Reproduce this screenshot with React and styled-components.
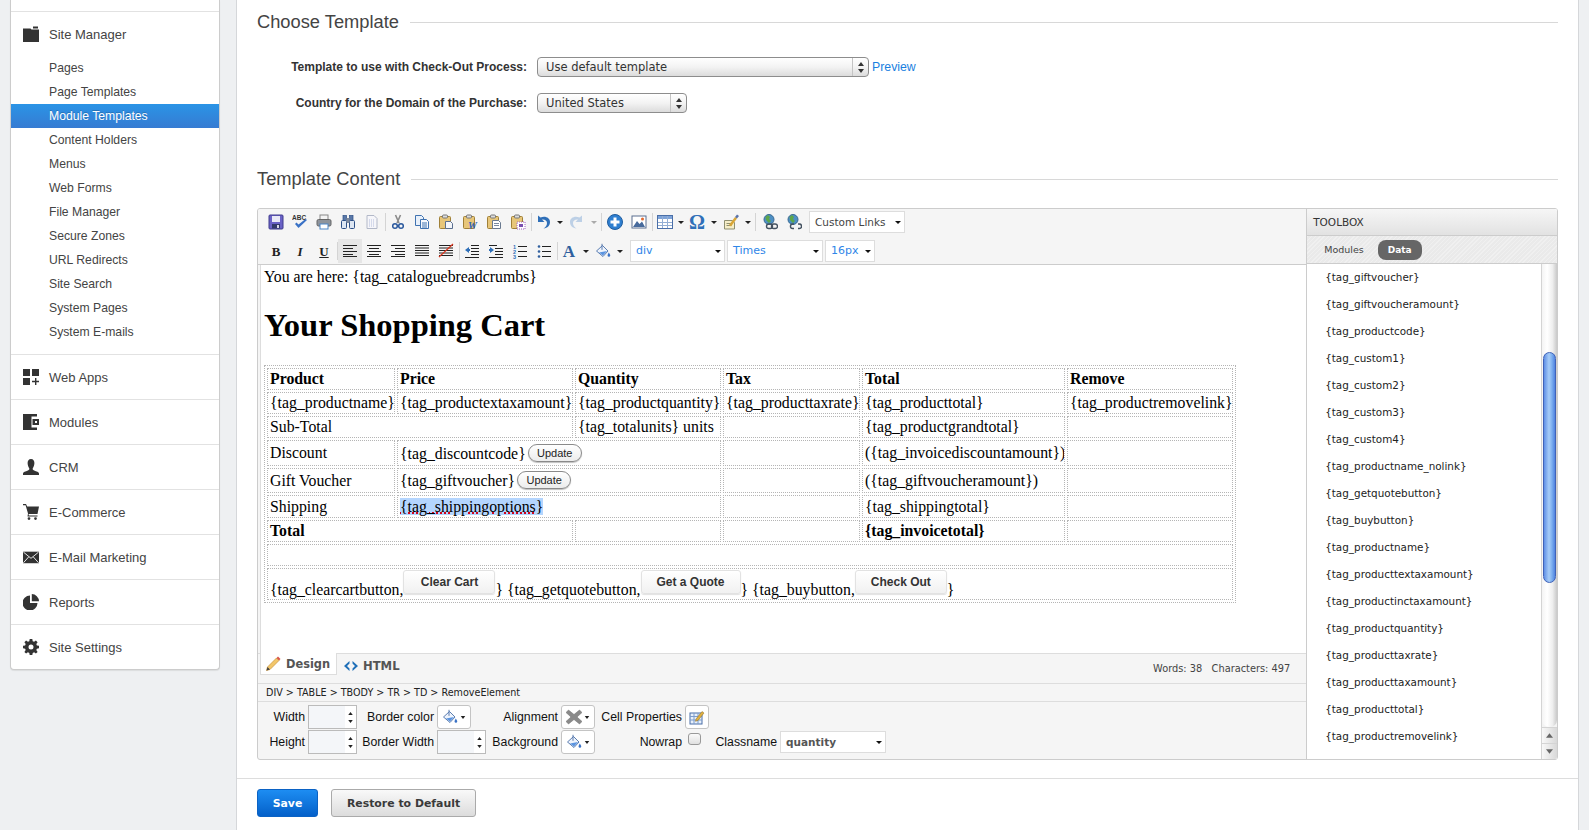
import React from "react";
import styled, { createGlobalStyle } from "styled-components";

const Global = createGlobalStyle`
  html, body { margin: 0; padding: 0; height: 100%; overflow: hidden; background: #eef0f2; }
  body { font-family: "Liberation Sans", Arial, sans-serif; }
  * { box-sizing: border-box; }
`;

const LUCIDA = `"DejaVu Sans", Verdana, sans-serif`;

/* ---------- page ---------- */
const Page = styled.div`
  display: flex;
  align-items: flex-start;
  width: 1589px;
  height: 830px;
  overflow: hidden;
`;

/* ---------- sidebar ---------- */
const Sidebar = styled.nav`
  width: 210px;
  margin-left: 10px;
  background: #fff;
  border: 1px solid #ccc;
  border-top: 0;
  border-radius: 0 0 4px 4px;
  box-shadow: 0 1px 1px rgba(0, 0, 0, 0.08);
`;
const SidebarStub = styled.div`
  height: 12px;
  border-bottom: 1px solid #e2e2e2;
`;
const SiteBlock = styled.div`
  height: 343px;
  border-bottom: 1px solid #e2e2e2;
`;
const NavHead = styled.div`
  display: flex;
  align-items: center;
  height: 44px;
  padding-left: 12px;
  font-size: 13px;
  color: #444;
  gap: 10px;
  & > svg { flex: none; }
`;
const NavRow = styled(NavHead)`
  height: ${(p) => (p.$last ? 44 : 45)}px;
  border-bottom: ${(p) => (p.$last ? "0" : "1px solid #e2e2e2")};
`;
const SubItem = styled.div`
  height: 24px;
  line-height: 24px;
  padding-left: 38px;
  font-size: 12.2px;
  color: ${(p) => (p.$active ? "#fff" : "#444")};
  background: ${(p) => (p.$active ? "linear-gradient(#2a94e6,#367bd2)" : "transparent")};
  text-shadow: ${(p) => (p.$active ? "0 -1px 0 rgba(0,0,0,.2)" : "none")};
`;

/* ---------- main ---------- */
const Main = styled.main`
  width: 1343px;
  margin-left: 16px;
  height: 830px;
  background: #fff;
  border-left: 1px solid #d5d7da;
  border-right: 1px solid #d5d7da;
`;
const Inner = styled.div`
  padding: 0 20px 0 20px;
`;
const SectionHead = styled.div`
  display: flex;
  align-items: center;
  height: 44px;
  margin-top: ${(p) => p.$mt || 0}px;
  gap: 11px;
  font-size: 18.3px;
  color: #444;
  &::after { content: ""; flex: 1; height: 1px; background: #d8d8d8; }
`;
const FormRow = styled.div`
  display: flex;
  align-items: center;
  height: 20px;
  margin-top: ${(p) => p.$mt}px;
`;
const FormLabel = styled.label`
  width: 270px;
  text-align: right;
  font-size: 12px;
  font-weight: bold;
  color: #333;
  margin-right: 10px;
`;
const AquaSelect = styled.div`
  position: relative;
  width: ${(p) => p.$w}px;
  height: 20px;
  line-height: 18px;
  padding-left: 8px;
  border: 1px solid #8d8d8d;
  border-radius: 4px;
  background: linear-gradient(#fff, #f3f3f3 50%, #dcdcdc);
  font-family: ${LUCIDA};
  font-size: 11.5px;
  color: #333;
`;
const AquaArrows = styled.span`
  position: absolute;
  right: 0;
  top: 0;
  bottom: 0;
  width: 16px;
  border-left: 1px solid #c4c4c4;
  display: flex;
  align-items: center;
  justify-content: center;
`;
const LinkText = styled.a`
  margin-left: 3px;
  font-size: 12.3px;
  color: #1b7fe0;
`;

/* ---------- editor ---------- */
const Editor = styled.section`
  display: flex;
  height: 552px;
  margin-top: 7px;
  border: 1px solid #ccc;
  border-radius: 3px;
  overflow: hidden;
  background: #f5f5f5;
`;
const EditorCol = styled.div`
  width: 1049px;
  display: flex;
  flex-direction: column;
`;
const Toolbar = styled.div`
  height: 56px;
  border-bottom: 1px solid #ccc;
  background: #f5f5f5;
`;
const ToolRow = styled.div`
  display: flex;
  align-items: center;
  height: 26px;
  margin-top: ${(p) => p.$mt || 0}px;
  padding-left: 6px;
`;
const Slot = styled.span`
  flex: none;
  width: ${(p) => p.$w || 24}px;
  height: 24px;
  display: flex;
  align-items: center;
  justify-content: center;
  background: ${(p) => (p.$active ? "#e6e6e6" : "transparent")};
`;
const Glyph = styled.span`
  font-family: "Liberation Serif", serif;
  font-weight: bold;
  font-style: ${(p) => (p.$i ? "italic" : "normal")};
  text-decoration: ${(p) => (p.$u ? "underline" : "none")};
  font-size: ${(p) => p.$s || 13}px;
  color: ${(p) => p.$c || "#222"};
  line-height: 1;
`;
const Caret = styled.span`
  flex: none;
  width: ${(p) => p.$w || 11}px;
  display: flex;
  justify-content: center;
  &::after {
    content: "";
    border-left: 3px solid transparent;
    border-right: 3px solid transparent;
    border-top: 3px solid ${(p) => (p.$faded ? "#aaa" : "#222")};
  }
`;
const Sep = styled.span`
  flex: none;
  width: ${(p) => p.$w || 2}px;
  height: 18px;
  display: flex;
  justify-content: center;
  &::after { content: ""; width: 1px; background: #d4d4d4; }
`;
const Gap = styled.span`
  flex: none;
  width: ${(p) => p.$w}px;
`;
const ToolSelect = styled.div`
  flex: none;
  position: relative;
  width: ${(p) => p.$w}px;
  height: 22px;
  line-height: 20px;
  padding-left: ${(p) => p.$pl || 5}px;
  background: #fff;
  border: 1px solid #ddd;
  font-family: ${LUCIDA};
  font-size: ${(p) => p.$fs || 11}px;
  color: ${(p) => p.$c || "#2f86e8"};
  &::after {
    content: "";
    position: absolute;
    right: 3px;
    top: 9px;
    border-left: 3px solid transparent;
    border-right: 3px solid transparent;
    border-top: 3px solid #111;
  }
`;
const EditArea = styled.div`
  height: 388px;
  background: #fff;
  margin-left: 2px;
  border-left: 1px solid #ddd;
  padding: 3px 0 0 3px;
  font-family: "Liberation Serif", "Times New Roman", serif;
  font-size: 15.8px;
  line-height: 18px;
  color: #000;
  overflow: hidden;
`;
const Title = styled.h1`
  margin: 21px 0 21px;
  font-size: 32.5px;
  line-height: 37px;
  font-weight: bold;
`;
const Table = styled.table`
  table-layout: fixed;
  width: 972px;
  border-collapse: separate;
  border-spacing: 2px;
  border: 1px dotted #b5b5b5;
`;
const Tr = styled.tr`
  height: ${(p) => p.$h}px;
`;
const Td = styled.td`
  border: 1px dotted #b5b5b5;
  padding: 0 0 0 2px;
  white-space: nowrap;
  overflow: hidden;
  vertical-align: ${(p) => p.$va || "middle"};
  font-weight: ${(p) => (p.$b ? "bold" : "normal")};
`;
const PillButton = styled.button`
  height: 18px;
  width: ${(p) => p.$w || 54}px;
  padding: 0;
  margin-left: 2px;
  border: 1px solid #8a8a8a;
  border-radius: 9px;
  background: linear-gradient(#fff, #ececec);
  box-shadow: 0 1px 1px rgba(0, 0, 0, 0.25);
  font-family: "Liberation Sans", sans-serif;
  font-size: 11px;
  color: #222;
  vertical-align: 2px;
`;
const CartButton = styled.button`
  height: 24px;
  width: ${(p) => p.$w}px;
  padding: 0;
  border: 1px solid #e2e2e2;
  border-radius: 3px;
  background: linear-gradient(#fff, #f1f1f1);
  box-shadow: 0 1px 1px rgba(0, 0, 0, 0.12);
  font-family: "Liberation Sans", sans-serif;
  font-size: 12px;
  font-weight: bold;
  color: #333;
  vertical-align: 9px;
`;
const Selected = styled.span`
  background: #b4d5fe;
  text-decoration: underline dotted #d0021b 2px;
  text-underline-offset: 1px;
`;
const TabBar = styled.div`
  position: relative;
  height: 30px;
  display: flex;
  align-items: flex-start;
  padding-left: 2px;
  border-top: 1px solid #ddd;
  background: #f5f5f5;
`;
const DesignTab = styled.div`
  display: flex;
  align-items: center;
  gap: 5px;
  height: 22px;
  width: 77px;
  padding-left: 4px;
  background: #fff;
  border-left: 1px solid #ddd;
  border-right: 1px solid #ddd;
  border-bottom: 1px solid #ddd;
  margin-top: -1px;
  font-family: ${LUCIDA};
  font-size: 11.4px;
  font-weight: bold;
  color: #555;
`;
const HtmlTab = styled(DesignTab)`
  background: transparent;
  border: 0;
  margin-top: 1px;
  padding-left: 6px;
  gap: 4px;
  font-size: 11.6px;
  width: auto;
`;
const Counts = styled.div`
  margin-left: auto;
  margin-right: 16px;
  margin-top: 9px;
  font-family: ${LUCIDA};
  font-size: 9.8px;
  color: #444;
  white-space: pre;
`;
const Crumbs = styled.div`
  height: 19px;
  line-height: 18px;
  padding-left: 8px;
  border-top: 1px solid #ddd;
  border-bottom: 1px solid #ddd;
  font-family: ${LUCIDA};
  font-size: 9.6px;
  color: #222;
`;
const PropsGrid = styled.div`
  display: grid;
  grid-template-columns: 50px 49px 80px 49px 75px 34px 90px 24px 71px 106px;
  grid-template-rows: 24px 24px;
  row-gap: 1px;
  padding: 3px 0 0 0;
  font-size: 12.3px;
  color: #111;
`;
const PropLabel = styled.span`
  grid-column: ${(p) => p.$col};
  grid-row: ${(p) => p.$row};
  align-self: center;
  justify-self: end;
  padding-right: 3px;
  white-space: nowrap;
`;
const PropField = styled.div`
  grid-column: ${(p) => p.$col};
  grid-row: ${(p) => p.$row};
  display: flex;
  align-items: center;
`;
const NumberBox = styled.div`
  width: 49px;
  height: 24px;
  display: flex;
  border: 1px solid #bbb;
  background: #fff;
`;
const NumberFace = styled.span`
  flex: 1;
  background: #f4f6f9;
`;
const Spin = styled.span`
  width: 11px;
  display: flex;
  flex-direction: column;
  align-items: center;
  justify-content: space-around;
  padding: 3px 0;
`;
const SwatchButton = styled.div`
  width: 34px;
  height: 24px;
  display: flex;
  align-items: center;
  justify-content: flex-end;
  gap: 2px;
  padding-right: 4px;
  background: #fff;
  border: 1px solid #c4c4c4;
  border-radius: 3px;
`;
const IconButton = styled(SwatchButton)`
  width: 24px;
  padding: 0;
  justify-content: center;
`;
const CheckBox = styled.span`
  width: 13px;
  height: 12px;
  margin: -6px 0 0 3px;
  border: 1px solid #999;
  border-radius: 3px;
  background: linear-gradient(#fafafa, #e0e0e0);
`;
const ClassSelect = styled(ToolSelect)`
  font-size: 10.5px;
  color: #555;
  font-weight: bold;
  height: 22px;
`;

/* ---------- toolbox ---------- */
const Toolbox = styled.aside`
  width: 251px;
  display: flex;
  flex-direction: column;
  border-left: 1px solid #ccc;
  background: #fff;
`;
const ToolboxHead = styled.div`
  height: 27px;
  line-height: 26px;
  padding-left: 6px;
  background: linear-gradient(#f6f6f6, #e2e2e2);
  border-bottom: 1px solid #ccc;
  font-family: ${LUCIDA};
  font-size: 10.5px;
  color: #333;
`;
const ToolboxTabs = styled.div`
  height: 28px;
  display: flex;
  align-items: center;
  padding-left: 17px;
  border-bottom: 1px solid #ccc;
  background: repeating-linear-gradient(135deg, #f0f0f0 0 1px, #eaeaea 1px 3px);
  font-family: ${LUCIDA};
  font-size: 9.5px;
  color: #444;
`;
const DataPill = styled.span`
  width: 44px;
  height: 20px;
  line-height: 20px;
  margin-left: 14px;
  text-align: center;
  border-radius: 8px;
  background: #666;
  color: #fff;
  font-size: 9px;
  font-weight: bold;
`;
const ToolboxBody = styled.div`
  flex: 1;
  min-height: 0;
  display: flex;
`;
const TagList = styled.ul`
  flex: 1;
  margin: 0;
  padding: 0 0 0 18px;
  list-style: none;
  overflow: hidden;
  font-family: ${LUCIDA};
  font-size: 10.4px;
  color: #222;
`;
const TagItem = styled.li`
  height: 27px;
  line-height: 26px;
  white-space: nowrap;
`;
const ScrollBar = styled.div`
  width: 16px;
  display: flex;
  flex-direction: column;
  border-left: 1px solid #d4d4d4;
  background: #f3f3f3;
`;
const Track = styled.div`
  flex: 1;
  padding: 88px 1px 0;
  background: linear-gradient(90deg, #f4f4f4, #fff 35%, #eee 70%, #c9c9c9);
  border-radius: 0 0 7px 7px;
`;
const Thumb = styled.div`
  height: 231px;
  border-radius: 7px;
  border: 1px solid #3f62b8;
  background: linear-gradient(90deg, #5f8fe6, #a6ccf7 45%, #7fb1f0 70%, #4f83e0);
`;
const ScrollBtn = styled.div`
  height: 16px;
  display: flex;
  align-items: center;
  justify-content: center;
  border-top: 1px solid #d4d4d4;
  background: linear-gradient(90deg, #f8f8f8, #d8d8d8);
`;

/* ---------- footer ---------- */
const Footer = styled.footer`
  display: flex;
  gap: 13px;
  margin-top: 18px;
  padding: 10px 0 0 20px;
  border-top: 1px solid #ddd;
`;
const SaveButton = styled.button`
  width: 61px;
  height: 28px;
  border: 1px solid #0b62c4;
  border-radius: 3px;
  background: linear-gradient(#1d8df2, #0460c9);
  color: #fff;
  font-family: ${LUCIDA};
  font-size: 10.9px;
  font-weight: bold;
  padding: 0;
`;
const RestoreButton = styled(SaveButton)`
  width: 145px;
  border-color: #aaa;
  background: linear-gradient(#f9f9f9, #dcdcdc);
  color: #3a3a3a;
`;

/* ---------- drawings ---------- */
const Svg = ({ s = 16, v = "0 0 16 16", children }) => (
  <svg width={s} height={s} viewBox={v} aria-hidden="true">{children}</svg>
);

const nav = {
  folder: <path fill="#333" d="M0 2.5h7.5l1 1H16V16H0zM10 0.5h5v2h-5z" />,
  apps: <path fill="#333" d="M0 0h7v7H0zM9 0h7v7H9zM0 9h7v7H0zM12 9h1.4v2.8H16v1.4h-2.6V16H12v-2.8H9v-1.4h3z" />,
  modules: <path fill="#333" fillRule="evenodd" d="M0 0h14v2.5H8.5v11H14V16H0zM9.5 5H16v6H9.5zM12 7v2h2V7z" />,
  person: <path fill="#333" d="M8 0c2.3 0 3.4 1.7 3.4 4S10.5 8 9.8 9.2c-.4 1 0 1.8 1.3 2.3 2.4.9 4.9 1.5 4.9 3v1.5H0v-1.5c0-1.5 2.5-2.1 4.9-3 1.3-.5 1.7-1.3 1.3-2.3C5.5 8 4.6 6.3 4.6 4S5.7 0 8 0z" />,
  cart: <path fill="#333" d="M0 0h3l1.2 2.5H16l-1.5 7.5H5.500L5.900 11.500H14.500v1H4.500L5 9.500 2.600 1.200H0zM6 13.200a1.400 1.400 0 1 1 0 2.800 1.400 1.400 0 0 1 0-2.800zM12.500 13.200a1.400 1.400 0 1 1 0 2.800 1.400 1.400 0 0 1 0-2.800z" />,
  mail: <><rect x="0" y="2" width="18" height="13" fill="#333" /><path d="M0.500 2.500 9 9.500l8.500-7M0.500 14.500 6.500 7.800M17.500 14.500 11.500 7.800" fill="none" stroke="#fff" strokeWidth="1" /></>,
  pie: <path fill="#333" d="M7 1.500V9h7.500A7.500 7.500 0 1 1 7 1.500zM8.800 0A7.500 7.500 0 0 1 16 7.200H8.800z" />,
  gear: <path fill="#333" fillRule="evenodd" d="M6.700 0h2.600l.4 2.200 1.400.6L12.900 1.500l1.700 1.700-1.300 1.800.6 1.400 2.100.4v2.500l-2.100.4-.6 1.400 1.300 1.800-1.700 1.700-1.800-1.300-1.400.6-.4 2.100H6.700l-.4-2.100-1.400-.6-1.800 1.300-1.700-1.700 1.300-1.800-.6-1.400L0 9.300V6.800l2.100-.4.6-1.400-1.300-1.800 1.700-1.700 1.800 1.300 1.400-.6zM8 5.500a2.500 2.500 0 1 0 0 5 2.500 2.500 0 0 0 0-5z" />,
};

const Lines = ({ rows, c = "#222" }) => (
  <>{rows.map(([x, y, w], i) => <rect key={i} x={x} y={y} width={w} height="1" fill={c} />)}</>
);
const clip = (
  <>
    <rect x="1.500" y="2.500" width="11" height="12" rx="1" fill="#e7c67a" stroke="#a08038" />
    <rect x="4.500" y="1" width="5" height="3" rx="1" fill="#ddd" stroke="#777" />
  </>
);
const bucket = (
  <>
    <path d="M1.500 8 7.500 2.500 13 8l-5 5.500z" fill="#eef3fb" stroke="#4a6fa8" strokeWidth=".9" />
    <path d="M7 .8v6" stroke="#4a6fa8" strokeWidth=".9" />
    <path d="M4 9.500l8-1.500-4 4.500z" fill="#5a94e0" />
    <path d="M13.800 9.500c.9 1.400 1.400 2.200 1.400 2.900a1.300 1.300 0 0 1-2.600 0c0-.7.400-1.500 1.200-2.900z" fill="#3a72c6" />
  </>
);
const globe = (
  <>
    <circle cx="7" cy="5.500" r="5" fill="#4d8fc4" stroke="#3a6a92" />
    <path d="M3.500 3 6 1l2 2-1 2 2 2-2 2-3-3z" fill="#5ca64a" />
  </>
);

const tool = {
  save: <><rect x="1" y="1" width="14" height="14" rx="1" fill="#6a62c6" stroke="#3e3a8c" /><rect x="4" y="2" width="8" height="6" fill="#e9e9f6" /><rect x="4" y="10" width="8" height="4.500" fill="#333a6a" /><rect x="9" y="11" width="2" height="3" fill="#d8d8e8" /></>,
  spell: <><text x="0" y="6" fontFamily="Liberation Sans" fontWeight="bold" fontSize="6.500" fill="#333">ABC</text><path d="M3 10l3.500 4L15 6l-1.500-1L6.500 10.500 4.500 8.500z" fill="#3a72c6" /></>,
  print: <><rect x="4" y="1" width="8" height="5" fill="#f4f4f4" stroke="#888" /><rect x="1" y="5.500" width="14" height="6.500" rx="1.500" fill="#8e949c" stroke="#666" /><rect x="4" y="10" width="8" height="5" fill="#fff" stroke="#4a86c8" /></>,
  find: <><rect x="3" y="1.500" width="3.500" height="5" fill="#5a78a8" stroke="#2c4f86" strokeWidth=".7" /><rect x="9.500" y="1.500" width="3.500" height="5" fill="#5a78a8" stroke="#2c4f86" strokeWidth=".7" /><rect x="1.500" y="6.500" width="5" height="8" rx="1" fill="#dde6f2" stroke="#2c4f86" /><rect x="9.500" y="6.500" width="5" height="8" rx="1" fill="#dde6f2" stroke="#2c4f86" /><rect x="6.500" y="4" width="3" height="5" fill="#7e8a9c" /></>,
  doc: <><path d="M3 1.500h7l3 3v10H3z" fill="#f6f6fa" stroke="#b2b8c8" /><path d="M5 6h6M5 8h6M5 10h6M5 12h6" stroke="#b4bedc" strokeDasharray="1 1" /></>,
  cut: <><path d="M5.500 1 9 9M10.500 1 7 9" stroke="#8a8a8a" strokeWidth="1.600" /><circle cx="5" cy="12" r="2.300" fill="none" stroke="#2c5a9e" strokeWidth="1.500" /><circle cx="11" cy="12" r="2.300" fill="none" stroke="#2c5a9e" strokeWidth="1.500" /></>,
  copy: <><path d="M1.500 1.500h6l2 2v8h-8z" fill="#e8f0fa" stroke="#3f72b0" /><path d="M6.500 5.500h6l2 2v7h-8z" fill="#f6f9fd" stroke="#3f72b0" /><path d="M8 9h5M8 11h5M8 13h5" stroke="#3f72b0" /></>,
  paste: <>{clip}<path d="M7.500 7.500h5l2 2v5h-7z" fill="#f4f6fa" stroke="#5a6f90" /></>,
  pasteWord: <>{clip}<text x="6" y="15" fontFamily="Liberation Serif" fontStyle="italic" fontWeight="bold" fontSize="10" fill="#2f63b8">W</text></>,
  pasteText: <>{clip}<path d="M6.500 6.500h6l2 2v6h-8z" fill="#fff" stroke="#6a7a90" /><path d="M8 9.500h5M8 11.500h5" stroke="#7a8aa0" /></>,
  pasteSpecial: <>{clip}<rect x="7" y="8" width="8" height="7" fill="#fff" stroke="#a060c0" strokeDasharray="1 1" /><rect x="9" y="10" width="4" height="3" fill="#7a50b0" /></>,
  undo: <path d="M3 1.500v6.500h6.500L7 5.500C9.500 5 12 6.500 12 9c0 2.500-1.500 4.200-3.500 5.500 4-.5 6.500-3 6.500-6.500 0-4-4.500-6.500-9.500-4.500z" fill="#2f6fb8" />,
  redo: <g transform="matrix(-1 0 0 1 16 0)"><path d="M3 1.500v6.500h6.500L7 5.500C9.500 5 12 6.500 12 9c0 2.500-1.500 4.200-3.500 5.500 4-.5 6.500-3 6.500-6.500 0-4-4.500-6.500-9.500-4.500z" fill="#bdd0e6" /></g>,
  plus: <><circle cx="8" cy="8" r="7.500" fill="#2f7fd0" stroke="#1f5c9e" /><path d="M6.500 3.500h3v3h3v3h-3v3h-3v-3h-3v-3h3z" fill="#fff" /></>,
  image: <><rect x="1" y="2" width="14" height="12" fill="#fff" stroke="#5a6f90" /><path d="M2 13l4-6 2.500 3L11 7.500l3 5.500z" fill="#476a9c" /><circle cx="11.500" cy="5" r="1.500" fill="#e2672c" /></>,
  table: <><rect x="0.500" y="1.500" width="15" height="13" fill="#fff" stroke="#4a6fa8" /><rect x="1" y="2" width="14" height="3" fill="#7ea3d8" /><path d="M1 8.500h14M1 11.500h14M5.500 2v12M10.500 2v12" stroke="#93aed4" /></>,
  brush: <><path d="M1.500 6.500h8l2 2v6.500h-10z" fill="#f6eec8" stroke="#8f8f70" /><path d="M3.500 9.500h5M3.500 11.500h5" stroke="#8f8f70" /><path d="M6 11 12 3l2 1.500-6 8z" fill="#d9a636" /><path d="M12 3l2-2.500 2 1.500-2 2.500z" fill="#5a72a8" /></>,
  link: <>{globe}<rect x="4.500" y="10" width="6" height="4.500" rx="2.200" fill="none" stroke="#445260" strokeWidth="1.400" /><rect x="9.500" y="10" width="6" height="4.500" rx="2.200" fill="none" stroke="#445260" strokeWidth="1.400" /></>,
  unlink: <>{globe}<path d="M8 10H6.700a2.200 2.200 0 0 0 0 4.500H8M12 10h1.300a2.200 2.200 0 0 1 0 4.500H12" fill="none" stroke="#445260" strokeWidth="1.400" /></>,
  left: <Lines rows={[[1, 2, 14], [1, 5, 10], [1, 8, 14], [1, 11, 10], [1, 13, 14]]} />,
  center: <Lines rows={[[1, 2, 14], [3, 5, 10], [1, 8, 14], [3, 11, 10], [1, 13, 14]]} />,
  right: <Lines rows={[[1, 2, 14], [5, 5, 10], [1, 8, 14], [5, 11, 10], [1, 13, 14]]} />,
  justify: <Lines rows={[[1, 2, 14], [1, 4.500, 14], [1, 7, 14], [1, 9.500, 14], [1, 12, 14]]} />,
  strike: <><Lines rows={[[1, 2, 14], [1, 4.500, 14], [1, 7, 14], [1, 9.500, 14], [1, 12, 14]]} /><path d="M1 14 15 1" stroke="#d8341c" strokeWidth="1.200" /></>,
  outdent: <><Lines rows={[[7, 2, 8], [7, 5, 8], [7, 8, 8], [7, 11, 8], [1, 14, 14]]} /><path d="M1 7l4-3v2h1v2H5v2z" fill="#2f6fb8" /></>,
  indent: <><Lines rows={[[1, 2, 8], [7, 5, 8], [7, 8, 8], [7, 11, 8], [1, 14, 14]]} /><path d="M6 7L2 4v2H1v2h1v2z" fill="#2f6fb8" /></>,
  ol: <><Lines rows={[[6, 3, 9], [6, 8, 9], [6, 13, 9]]} /><text x="1" y="5.500" fontSize="5.500" fontWeight="bold" fontFamily="Liberation Sans" fill="#2f6fb8">1</text><text x="1" y="10.500" fontSize="5.500" fontWeight="bold" fontFamily="Liberation Sans" fill="#2f6fb8">2</text><text x="1" y="15.500" fontSize="5.500" fontWeight="bold" fontFamily="Liberation Sans" fill="#2f6fb8">3</text></>,
  ul: <><Lines rows={[[6, 3, 9], [6, 8, 9], [6, 13, 9]]} /><circle cx="3" cy="3.500" r="1.300" fill="#2f5f9e" /><circle cx="3" cy="8.500" r="1.300" fill="#2f5f9e" /><circle cx="3" cy="13.500" r="1.300" fill="#2f5f9e" /></>,
  fill: bucket,
  cross: <path d="M2.500 1 8 5.500 13.500 1 16 3.500 11 8l5 4.500-2.500 2.500L8 10.500 2.500 15 0 12.500 5 8 0 3.500z" fill="#8a8a8a" stroke="#6d6d6d" strokeWidth=".5" />,
  cell: <><rect x="1" y="4" width="12" height="11" fill="#e8f0fb" stroke="#4a6fa8" /><path d="M1 7.500h12M1 11h12M5 4v11M9 4v11" stroke="#7d9ccc" /><path d="M7 10 13 2.500l2 1.500-6 7.500-2.500.800z" fill="#e0b040" stroke="#8a6a20" strokeWidth=".5" /></>,
  pencil: <><path d="M1.500 14.500 2.500 11 11.500 2 14 4.500 5 13.500z" fill="#f2c66a" stroke="#c8923a" strokeWidth=".7" /><path d="M11.500 2 13 .5 15.500 3 14 4.500z" fill="#d9574a" /><path d="M1.500 14.500 2.500 11 5 13.500z" fill="#444" /></>,
  code: <path d="M6.500 3 1 8l5.500 5V10.500L4 8l2.500-2.500zM9.500 3 15 8l-5.500 5V10.500L12 8 9.500 5.500z" fill="#1f6fb8" />,
};

const Nav = ({ n, v }) => <Svg v={v}>{nav[n]}</Svg>;
const Tool = ({ n }) => <Svg>{tool[n]}</Svg>;

const Arrow = ({ up, c = "#222", w = 6, h = 4 }) => (
  <svg width={w} height={h} viewBox="0 0 6 4" aria-hidden="true">
    <path d={up ? "M3 0l3 4H0z" : "M3 4 0 0h6z"} fill={c} />
  </svg>
);

/* ---------- data ---------- */
const siteItems = ["Pages", "Page Templates", "Module Templates", "Content Holders", "Menus", "Web Forms", "File Manager", "Secure Zones", "URL Redirects", "Site Search", "System Pages", "System E-mails"];
const navRows = [
  ["apps", "Web Apps"], ["modules", "Modules"], ["person", "CRM"], ["cart", "E-Commerce"],
  ["mail", "E-Mail Marketing", "0 0 18 16"], ["pie", "Reports"], ["gear", "Site Settings"],
];
const tags = ["giftvoucher", "giftvoucheramount", "productcode", "custom1", "custom2", "custom3", "custom4", "productname_nolink", "getquotebutton", "buybutton", "productname", "producttextaxamount", "productinctaxamount", "productquantity", "producttaxrate", "producttaxamount", "producttotal", "productremovelink", "productdiscountamount"];

const Spinner = () => (
  <NumberBox>
    <NumberFace />
    <Spin><Arrow up w={5} h={3} /><Arrow w={5} h={3} /></Spin>
  </NumberBox>
);

export default function App() {
  return (
    <Page>
      <Global />
      <Sidebar>
        <SidebarStub />
        <SiteBlock>
          <NavHead><Nav n="folder" />Site Manager</NavHead>
          {siteItems.map((t) => <SubItem key={t} $active={t === "Module Templates"}>{t}</SubItem>)}
        </SiteBlock>
        {navRows.map(([n, t, v], i) => (
          <NavRow key={t} $last={i === navRows.length - 1}><Nav n={n} v={v} />{t}</NavRow>
        ))}
      </Sidebar>

      <Main>
        <Inner>
          <SectionHead>Choose Template</SectionHead>
          <FormRow $mt={13}>
            <FormLabel>Template to use with Check-Out Process:</FormLabel>
            <AquaSelect $w={332}>Use default template
              <AquaArrows><svg width="6" height="11" viewBox="0 0 6 11"><path d="M3 0l3 4H0zM3 11 0 7h6z" fill="#333" /></svg></AquaArrows>
            </AquaSelect>
            <LinkText>Preview</LinkText>
          </FormRow>
          <FormRow $mt={16}>
            <FormLabel>Country for the Domain of the Purchase:</FormLabel>
            <AquaSelect $w={150}>United States
              <AquaArrows><svg width="6" height="11" viewBox="0 0 6 11"><path d="M3 0l3 4H0zM3 11 0 7h6z" fill="#333" /></svg></AquaArrows>
            </AquaSelect>
          </FormRow>
          <SectionHead $mt={44}>Template Content</SectionHead>

          <Editor>
            <EditorCol>
              <Toolbar>
                <ToolRow>
                  {["save", "spell", "print", "find", "doc"].map((n) => <Slot key={n}><Tool n={n} /></Slot>)}
                  <Sep />
                  {["cut", "copy", "paste", "pasteWord", "pasteText", "pasteSpecial"].map((n) => <Slot key={n}><Tool n={n} /></Slot>)}
                  <Sep />
                  <Slot $w={22}><Tool n="undo" /></Slot><Caret />
                  <Gap $w={1} />
                  <Slot $w={22}><Tool n="redo" /></Slot><Caret $faded />
                  <Sep $w={4} />
                  <Slot><Tool n="plus" /></Slot>
                  <Slot><Tool n="image" /></Slot>
                  <Sep $w={3} />
                  <Slot $w={22}><Tool n="table" /></Slot><Caret $w={10} />
                  <Slot $w={22}><Glyph $s={20} $c="#2f6fb8">Ω</Glyph></Slot><Caret />
                  <Slot><Tool n="brush" /></Slot><Caret $w={9} />
                  <Sep $w={6} />
                  <Slot><Tool n="link" /></Slot>
                  <Slot><Tool n="unlink" /></Slot>
                  <Gap $w={3} />
                  <ToolSelect $w={96} $c="#444" $fs={10.5}>Custom Links</ToolSelect>
                </ToolRow>
                <ToolRow $mt={3}>
                  <Slot><Glyph>B</Glyph></Slot>
                  <Slot><Glyph $i>I</Glyph></Slot>
                  <Slot><Glyph $u>U</Glyph></Slot>
                  <Sep />
                  <Slot $active><Tool n="left" /></Slot>
                  {["center", "right", "justify", "strike"].map((n) => <Slot key={n}><Tool n={n} /></Slot>)}
                  <Sep />
                  {["outdent", "indent", "ol", "ul"].map((n) => <Slot key={n}><Tool n={n} /></Slot>)}
                  <Sep />
                  <Slot $w={22}><Glyph $s={17} $c="#2f5f9e">A</Glyph></Slot><Caret />
                  <Gap $w={1} />
                  <Slot $w={22}><Tool n="fill" /></Slot><Caret />
                  <Gap $w={5} />
                  <ToolSelect $w={95}>div</ToolSelect>
                  <Gap $w={2} />
                  <ToolSelect $w={96}>Times</ToolSelect>
                  <Gap $w={2} />
                  <ToolSelect $w={50}>16px</ToolSelect>
                </ToolRow>
              </Toolbar>

              <EditArea>
                <div>You are here: {"{tag_cataloguebreadcrumbs}"}</div>
                <Title>Your Shopping Cart</Title>
                <Table>
                  <colgroup>
                    <col style={{ width: 128 }} /><col style={{ width: 176 }} /><col style={{ width: 146 }} />
                    <col style={{ width: 137 }} /><col style={{ width: 203 }} /><col style={{ width: 166 }} />
                  </colgroup>
                  <tbody>
                    <Tr $h={22}>
                      {["Product", "Price", "Quantity", "Tax", "Total", "Remove"].map((t) => <Td key={t} $b>{t}</Td>)}
                    </Tr>
                    <Tr $h={22}>
                      {["productname", "productextaxamount", "productquantity", "producttaxrate", "producttotal", "productremovelink"].map((t) => <Td key={t}>{`{tag_${t}}`}</Td>)}
                    </Tr>
                    <Tr $h={22}>
                      <Td colSpan={2}>Sub-Total</Td><Td>{"{tag_totalunits} units"}</Td><Td /><Td>{"{tag_productgrandtotal}"}</Td><Td />
                    </Tr>
                    <Tr $h={26}>
                      <Td>Discount</Td><Td colSpan={2}>{"{tag_discountcode}"}<PillButton>Update</PillButton></Td><Td /><Td>{"({tag_invoicediscountamount})"}</Td><Td />
                    </Tr>
                    <Tr $h={25}>
                      <Td>Gift Voucher</Td><Td colSpan={2}>{"{tag_giftvoucher}"}<PillButton>Update</PillButton></Td><Td /><Td>{"({tag_giftvoucheramount})"}</Td><Td />
                    </Tr>
                    <Tr $h={23}>
                      <Td>Shipping</Td><Td colSpan={2}><Selected>{"{tag_shippingoptions}"}</Selected></Td><Td /><Td>{"{tag_shippingtotal}"}</Td><Td />
                    </Tr>
                    <Tr $h={22}>
                      <Td colSpan={2} $b>Total</Td><Td /><Td /><Td $b>{"{tag_invoicetotal}"}</Td><Td />
                    </Tr>
                    <Tr $h={22}><Td colSpan={6} /></Tr>
                    <Tr $h={32}>
                      <Td colSpan={6} $va="bottom">
                        {"{tag_clearcartbutton,"}<CartButton $w={92}>Clear Cart</CartButton>{"} {tag_getquotebutton,"}<CartButton $w={100}>Get a Quote</CartButton>{"} {tag_buybutton,"}<CartButton $w={92}>Check Out</CartButton>{"}"}
                      </Td>
                    </Tr>
                  </tbody>
                </Table>
              </EditArea>

              <TabBar>
                <DesignTab><Tool n="pencil" />Design</DesignTab>
                <HtmlTab><Tool n="code" />HTML</HtmlTab>
                <Counts>{"Words: 38   Characters: 497"}</Counts>
              </TabBar>
              <Crumbs>{"DIV > TABLE > TBODY > TR > TD > RemoveElement"}</Crumbs>
              <PropsGrid>
                <PropLabel $col={1} $row={1}>Width</PropLabel>
                <PropField $col={2} $row={1}><Spinner /></PropField>
                <PropLabel $col={3} $row={1}>Border color</PropLabel>
                <PropField $col={4} $row={1}><SwatchButton><Tool n="fill" /><Arrow w={6} h={3} /></SwatchButton></PropField>
                <PropLabel $col={5} $row={1}>Alignment</PropLabel>
                <PropField $col={6} $row={1}><SwatchButton><Tool n="cross" /><Arrow w={6} h={3} /></SwatchButton></PropField>
                <PropLabel $col={7} $row={1}>Cell Properties</PropLabel>
                <PropField $col={8} $row={1}><IconButton><Tool n="cell" /></IconButton></PropField>

                <PropLabel $col={1} $row={2}>Height</PropLabel>
                <PropField $col={2} $row={2}><Spinner /></PropField>
                <PropLabel $col={3} $row={2}>Border Width</PropLabel>
                <PropField $col={4} $row={2}><Spinner /></PropField>
                <PropLabel $col={5} $row={2}>Background</PropLabel>
                <PropField $col={6} $row={2}><SwatchButton><Tool n="fill" /><Arrow w={6} h={3} /></SwatchButton></PropField>
                <PropLabel $col={7} $row={2}>Nowrap</PropLabel>
                <PropField $col={8} $row={2}><CheckBox /></PropField>
                <PropLabel $col={9} $row={2}>Classname</PropLabel>
                <PropField $col={10} $row={2}><ClassSelect $w={106}>quantity</ClassSelect></PropField>
              </PropsGrid>
            </EditorCol>

            <Toolbox>
              <ToolboxHead>TOOLBOX</ToolboxHead>
              <ToolboxTabs>Modules<DataPill>Data</DataPill></ToolboxTabs>
              <ToolboxBody>
                <TagList>{tags.map((t) => <TagItem key={t}>{`{tag_${t}}`}</TagItem>)}</TagList>
                <ScrollBar>
                  <Track><Thumb /></Track>
                  <ScrollBtn><Arrow up c="#666" w={7} h={5} /></ScrollBtn>
                  <ScrollBtn><Arrow c="#666" w={7} h={5} /></ScrollBtn>
                </ScrollBar>
              </ToolboxBody>
            </Toolbox>
          </Editor>
        </Inner>
        <Footer>
          <SaveButton>Save</SaveButton>
          <RestoreButton>Restore to Default</RestoreButton>
        </Footer>
      </Main>
    </Page>
  );
}
